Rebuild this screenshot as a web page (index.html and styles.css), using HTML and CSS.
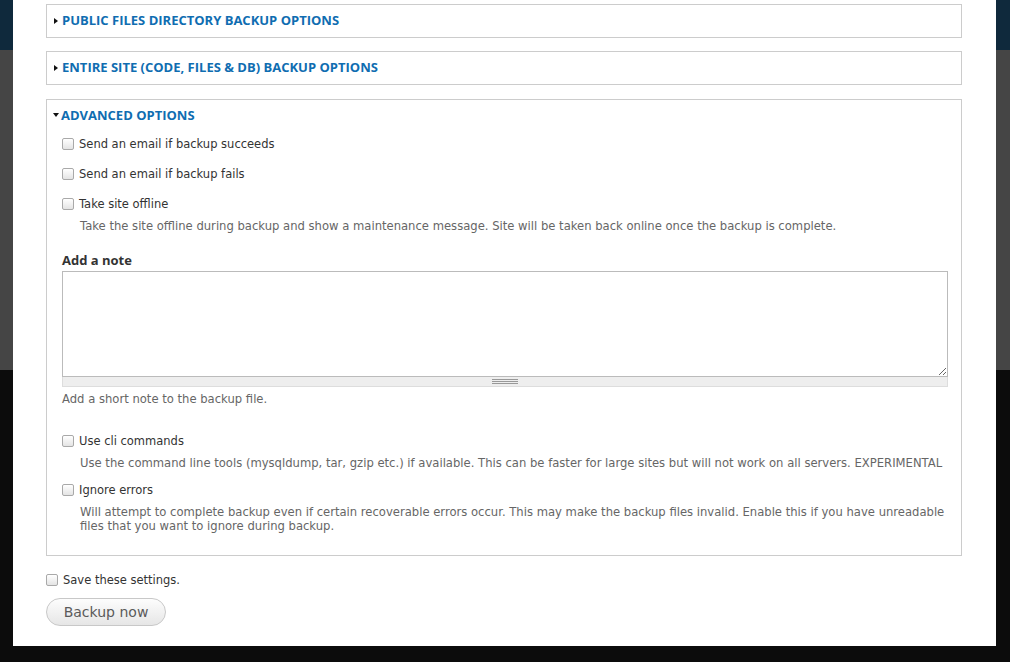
FILE: index.html
```html
<!DOCTYPE html>
<html lang="en">
<head>
    <meta charset="UTF-8">
    <title>Backup</title>
    <link rel="stylesheet" href="styles.css">
</head>
<body>
    <div class="backdrop">
        <div class="band-top"></div>
        <div class="band-mid"></div>
        <div class="band-low"></div>
    </div>
    <div class="modal">
        <div class="fieldset collapsed">
            <div class="legend"><span class="arrow-right"></span>Public files directory backup options</div>
        </div>
        <div class="fieldset collapsed">
            <div class="legend"><span class="arrow-right"></span>Entire site (code, files &amp; DB) backup options</div>
        </div>
        <div class="fieldset open">
            <div class="legend"><span class="arrow-down"></span>Advanced options</div>
            <label class="check first"><input type="checkbox"> Send an email if backup succeeds</label>
            <label class="check"><input type="checkbox"> Send an email if backup fails</label>
            <label class="check"><input type="checkbox"> Take site offline</label>
            <div class="desc">Take the site offline during backup and show a maintenance message. Site will be taken back online once the backup is complete.</div>

            <div class="field-title">Add a note</div>
            <textarea class="note"></textarea>
            <div class="grippie"></div>
            <div class="desc note-desc">Add a short note to the backup file.</div>

            <label class="check cli"><input type="checkbox"> Use cli commands</label>
            <div class="desc">Use the command line tools (mysqldump, tar, gzip etc.) if available. This can be faster for large sites but will not work on all servers. EXPERIMENTAL</div>
            <label class="check ignore"><input type="checkbox"> Ignore errors</label>
            <div class="desc two-line">Will attempt to complete backup even if certain recoverable errors occur. This may make the backup files invalid. Enable this if you have unreadable files that you want to ignore during backup.</div>
        </div>
        <label class="check save"><input type="checkbox"> Save these settings.</label>
        <button class="backup-btn">Backup now</button>
    </div>
</body>
</html>
```

FILE: styles.css
```css
body {
    margin: 0;
    padding: 0;
    font-family: "DejaVu Sans", Verdana, sans-serif;
    overflow: hidden;
}
.backdrop {
    display: flex;
    flex-direction: column;
    height: 662px;
}
.band-top {
    height: 50px;
    background: #0f293c;
}
.band-mid {
    height: 320px;
    background: #454545;
}
.band-low {
    flex: 1;
    background: #0c0c0c;
}
.modal {
    position: absolute;
    left: 13px;
    top: 0;
    width: 983px;
    height: 646px;
    background: #fff;
    box-sizing: border-box;
    padding: 4px 34px 0 33px;
    overflow: hidden;
}
.fieldset {
    border: 1px solid #cccccc;
    margin-bottom: 13px;
}
.fieldset.collapsed {
    height: 32px;
}
.legend {
    font-family: "Open Sans", sans-serif;
    font-weight: bold;
    font-size: 13px;
    text-transform: uppercase;
    color: #0f6db1;
    line-height: 31px;
    padding-left: 7px;
    display: flex;
    align-items: center;
}
.arrow-right {
    width: 0;
    height: 0;
    border-top: 3px solid transparent;
    border-bottom: 3px solid transparent;
    border-left: 4px solid #111;
    margin-right: 4px;
}
.arrow-down {
    width: 0;
    height: 0;
    border-left: 3px solid transparent;
    border-right: 3px solid transparent;
    border-top: 4px solid #111;
    margin-right: 2px;
    margin-left: -1px;
}
.fieldset.open {
    margin-top: 14px;
    padding: 0 13px 22px 15px;
}
.fieldset.open .legend {
    line-height: 30px;
    margin-left: -15px;
    padding-left: 7px;
}
.check {
    display: flex;
    align-items: center;
    font-size: 11.5px;
    color: #333;
    line-height: 18px;
    margin-top: 12px;
}
.check.first {
    margin-top: 5px;
}
.check input {
    appearance: none;
    -webkit-appearance: none;
    width: 12px;
    height: 12px;
    margin: 0 5px 0 0;
    border: 1px solid #a9a9a9;
    border-radius: 2px;
    background: linear-gradient(#ffffff, #e4e4e4);
    box-sizing: border-box;
}
.desc {
    font-size: 11.6px;
    color: #666;
    line-height: 16px;
    margin-top: 5px;
    padding-left: 18px;
}
.field-title {
    font-family: "Open Sans", sans-serif;
    font-weight: bold;
    font-size: 13px;
    color: #333;
    line-height: 18px;
    margin-top: 17px;
}
.note {
    display: block;
    width: 100%;
    height: 106px;
    margin: 2px 0 0 0;
    border: 1px solid #bbb;
    box-sizing: border-box;
    resize: vertical;
    font-family: inherit;
}
.grippie {
    height: 9px;
    background: #eeeeee;
    border: 1px solid #dddddd;
    border-top: none;
    background-image: linear-gradient(#999, #999), linear-gradient(#999, #999), linear-gradient(#999, #999);
    background-size: 26px 1px;
    background-repeat: no-repeat;
    background-position: center 2px, center 4px, center 6px;
}
.note-desc {
    padding-left: 0;
    margin-top: 4px;
}
.check.cli {
    margin-top: 25px;
}
.check.ignore {
    margin-top: 10px;
}
.desc.two-line {
    line-height: 14px;
    margin-top: 6px;
}
.check.save {
    margin-top: 15px;
}
.backup-btn {
    display: block;
    margin-top: 9px;
    width: 120px;
    height: 28px;
    border: 1px solid #c8c8c8;
    border-radius: 20px;
    background: linear-gradient(#fdfdfd, #e6e6e6);
    color: #5a5a5a;
    font-family: "DejaVu Sans", sans-serif;
    font-size: 14px;
    padding: 0;
}
```
